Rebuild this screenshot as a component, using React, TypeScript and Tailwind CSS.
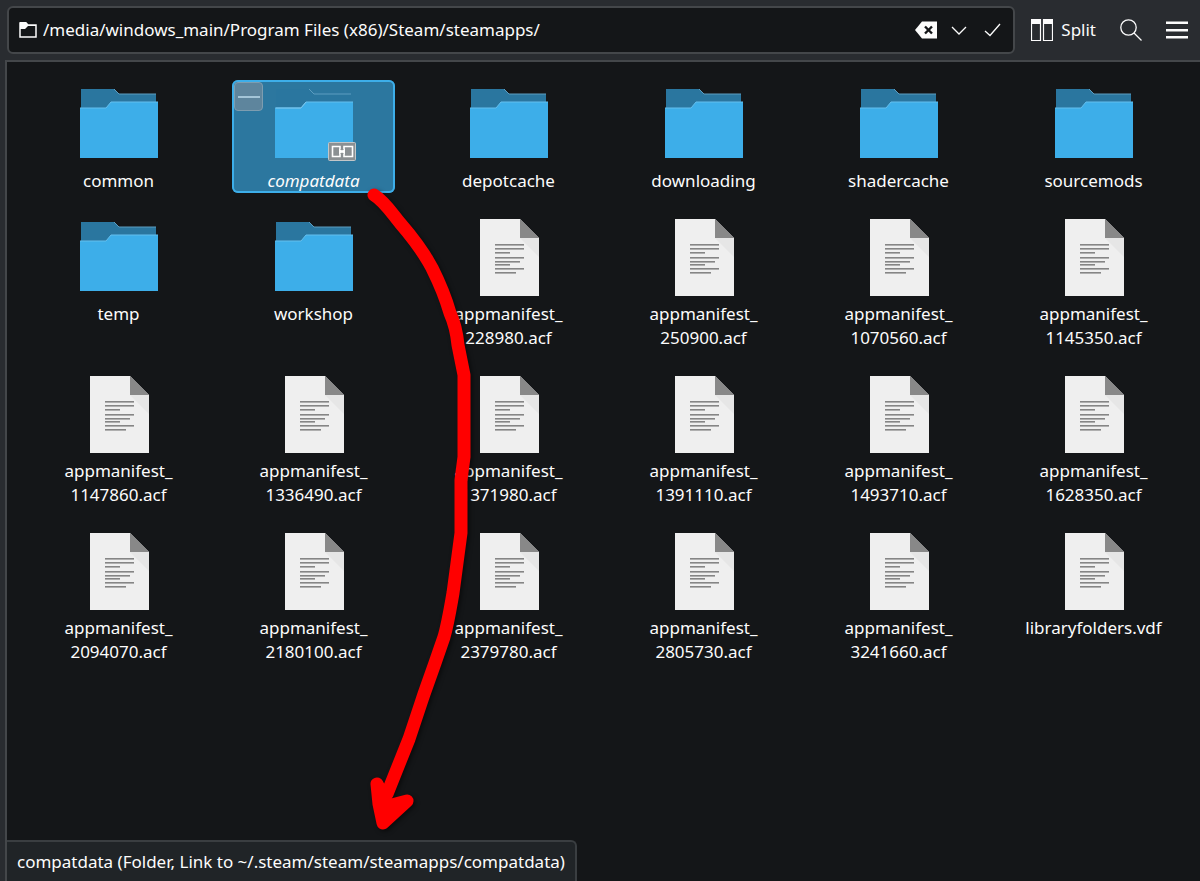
import { useState } from 'react'
import clsx from 'clsx'

type Item = { lines: string[]; kind: 'folder' | 'file'; link?: boolean }

const FOLDERS = ['common', 'compatdata', 'depotcache', 'downloading', 'shadercache', 'sourcemods', 'temp', 'workshop']

const MANIFESTS = [
  '228980', '250900', '1070560', '1145350',
  '1147860', '1336490', '1371980', '1391110', '1493710', '1628350',
  '2094070', '2180100', '2379780', '2805730', '3241660',
]

const ITEMS: Item[] = [
  ...FOLDERS.map((name): Item => ({ lines: [name], kind: 'folder', link: name === 'compatdata' })),
  ...MANIFESTS.map((id): Item => ({ lines: ['appmanifest_', `${id}.acf`], kind: 'file' })),
  { lines: ['libraryfolders.vdf'], kind: 'file' },
]

// y position and width of each text line on the document icon
const DOC_LINES = [
  [25, 29], [29, 29], [33, 15], [38, 29], [42, 25], [45, 15], [49, 29], [53, 21],
]

function FolderIcon({ link, selected }: { link?: boolean; selected: boolean }) {
  return (
    <svg width="78" height="77" viewBox="0 0 78 77" className="overflow-visible" aria-hidden="true">
      <path d="M1 3H34L39 8H76V24H1Z" fill="#2a769f" />
      <path d="M34 3L39 8H76" fill="none" stroke="#5c9dc0" strokeWidth="1" />
      <path d="M0 22H26L31 16H78V72H0Z" fill="#3daee9" />
      <path d="M0 22H26L31 16H78" fill="none" stroke="#64bfee" strokeWidth="1" />
      {selected && <path d="M1 22H26L31 16" fill="none" stroke="#79c4ec" strokeWidth="1" />}
      {link && (
        <g>
          <rect x="53.500" y="56.500" width="27" height="18" rx="1" fill="#8b9093" stroke="#c3c6c8" />
          <path d="M65 63V60.500H57.500V70.500H65V68M69 63V60.500H77.500V70.500H69V68" fill="none" stroke="#fff" strokeWidth="1.600" />
          <path d="M64 62.500L67 64.500L70 62.500V68.500L67 66.500L64 68.500Z" fill="#fff" />
        </g>
      )}
    </svg>
  )
}

function FileIcon() {
  return (
    <svg width="78" height="77" viewBox="0 0 78 77" aria-hidden="true">
      <path d="M10 0H50L69 19V77H10Z" fill="#efefef" />
      <path d="M50 19L69 38V19Z" fill="#e6e6e6" />
      <path d="M50 0L69 19H50Z" fill="#888" />
      {DOC_LINES.map(([y, width]) => (
        <rect key={y} x="25" y={y} width={width} height="1.600" fill="#858585" />
      ))}
    </svg>
  )
}

function Tile({ item, selected, onSelect }: { item: Item; selected: boolean; onSelect: () => void }) {
  return (
    <li>
      <button
        type="button"
        onClick={onSelect}
        className={clsx(
          'relative flex w-full flex-col items-center rounded-md pt-[6px]',
          selected && 'bg-[#2c779f] ring-2 ring-inset ring-[#3daee9]'
        )}
      >
        {selected && (
          <span className="absolute left-0.5 top-0.5 flex size-[29px] items-center justify-center rounded-sm border border-[#7d9db0] bg-[#5e859d]">
            <span className="h-0.5 w-[22px] bg-[#a4c5d8]" />
          </span>
        )}
        {item.kind === 'folder' ? <FolderIcon link={item.link} selected={selected} /> : <FileIcon />}
        <span className={clsx('mt-[6px] text-[17px] leading-[24px]', item.link && 'italic')}>
          {item.lines.map((line) => (
            <span key={line} className="block">
              {line}
            </span>
          ))}
        </span>
      </button>
    </li>
  )
}

function Toolbar() {
  const [path, setPath] = useState('/media/windows_main/Program Files (x86)/Steam/steamapps/')

  return (
    <header className="flex h-[60px] items-center bg-[#292c30] pb-px pl-[7px] pr-3">
      <div className="flex h-12 min-w-0 flex-1 items-center rounded-md border-2 border-[#44474a] bg-[#141618] pl-[10px] pr-[10px]">
        <svg width="18" height="18" viewBox="0 0 18 18" aria-hidden="true">
          <path d="M1 16V2H7L9 4H17V16Z" fill="none" stroke="#fcfcfc" strokeWidth="1.500" />
          <path d="M1 1H7L9 4H17V5H9L6 8H1Z" fill="#fcfcfc" />
        </svg>
        <input
          type="text"
          aria-label="Location"
          value={path}
          onChange={(e) => setPath(e.target.value)}
          className="ml-[6px] min-w-0 flex-1 bg-transparent text-[17px] leading-[24px] outline-none"
        />
        <div className="flex items-center gap-[12px]">
          <button type="button" aria-label="Clear" onClick={() => setPath('')}>
            <svg width="22" height="22" viewBox="0 0 22 22">
              <path d="M0 11L7 2.500H22V19.500H7Z" fill="#fcfcfc" />
              <path d="M10 7.500L17 14.500M17 7.500L10 14.500" stroke="#141618" strokeWidth="2.400" />
            </svg>
          </button>
          <button type="button" aria-label="History">
            <svg width="20" height="22" viewBox="0 0 20 22" fill="none" stroke="#fcfcfc" strokeWidth="1.300">
              <path d="M3 8L10 15L17 8" />
            </svg>
          </button>
          <button type="button" aria-label="Go">
            <svg width="22" height="22" viewBox="0 0 22 22" fill="none" stroke="#fcfcfc" strokeWidth="1.300">
              <path d="M4 12L9 16.500L19 5" />
            </svg>
          </button>
        </div>
      </div>
      <button type="button" className="ml-4 flex items-center gap-[8px] text-[17px] leading-[24px]">
        <svg width="22" height="22" viewBox="0 0 22 22" fill="none" aria-hidden="true">
          <path d="M0.500 0.500H9.500V21.500H0.500ZM12.500 0.500H21.500V21.500H12.500Z" stroke="#fcfcfc" strokeWidth="1.200" />
          <path d="M0 0H10V5H0ZM12 0H22V5H12Z" fill="#fcfcfc" />
        </svg>
        Split
      </button>
      <button type="button" aria-label="Search" className="ml-6">
        <svg width="22" height="22" viewBox="0 0 22 22" fill="none" stroke="#fcfcfc" strokeWidth="1.300">
          <circle cx="8.500" cy="8.500" r="7.700" />
          <path d="M14 14L21.500 21.500" />
        </svg>
      </button>
      <button type="button" aria-label="Open menu" className="ml-6">
        <svg width="22" height="22" viewBox="0 0 22 22" fill="#fcfcfc">
          <path d="M0 2.500H22V5H0ZM0 10H22V12.500H0ZM0 17H22V19.500H0Z" />
        </svg>
      </button>
    </header>
  )
}

function HandDrawnArrow() {
  return (
    <svg
      width="110"
      height="650"
      viewBox="363 185 110 650"
      className="pointer-events-none absolute left-[356px] top-[123px] overflow-visible drop-shadow-[2px_2px_2px_rgba(0,0,0,0.5)]"
      fill="none"
      stroke="#ff0000"
      strokeWidth="13"
      strokeLinecap="round"
      strokeLinejoin="round"
      aria-hidden="true"
    >
      <path d="M374 195C384 201 391 212 400 223C413 238 423 251 432 268C440 284 446 299 450 313C455 324 457 335 458 345L464 375V457L461 480V533L453 593C450 610 448 623 444 637L435 663L424 694L421 703L409 739L387 794" />
      <path d="M377 784L379 804L383 823L407 801L388 806Z" fill="#ff0000" />
    </svg>
  )
}

export default function App() {
  const [selected, setSelected] = useState(1)

  return (
    <div className="flex min-h-screen flex-col bg-[#292c30] font-['Noto_Sans',sans-serif] text-[#fcfcfc]">
      <Toolbar />
      <main className="relative ml-[5px] flex-1 border-l-2 border-t-2 border-[#44474a] bg-[#141618]">
        <ul className="grid grid-cols-6 gap-x-8 gap-y-5 pb-16 pl-[30px] pr-[25px] pt-[18px]">
          {ITEMS.map((item, i) => (
            <Tile key={item.lines.join('')} item={item} selected={selected === i} onSelect={() => setSelected(i)} />
          ))}
        </ul>
        <HandDrawnArrow />
        <p className="absolute bottom-0 left-0 rounded-tr-md border-r-2 border-t-2 border-[#3a3e41] bg-[#202427] pb-[7px] pl-[10px] pr-[10px] pt-[8px] text-[17px] leading-[24px]">
          compatdata (Folder, Link to ~/.steam/steam/steamapps/compatdata)
        </p>
      </main>
    </div>
  )
}
